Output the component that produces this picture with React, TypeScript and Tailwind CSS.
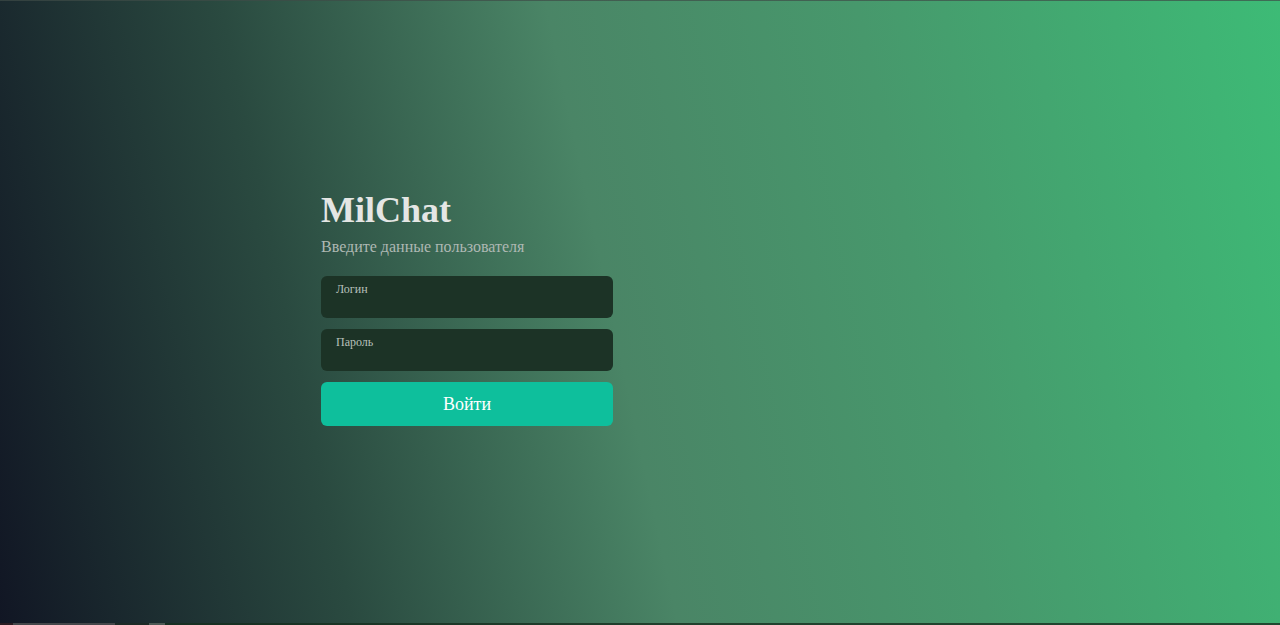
import React from "react";

export default function App() {
  return (
    <div
      className="w-[1280px] h-[625px] overflow-hidden flex flex-col bg-[linear-gradient(78deg,#111624_0%,#2a4a40_25%,#4a8566_48%,#47986c_70%,#3dbb76_100%)]"
      style={{ fontFamily: '"Liberation Serif", "Times New Roman", serif' }}
    >
      <div className="h-px w-full bg-[#3e4c47]/70 shrink-0" />
      <div className="flex-1 flex flex-col pl-[321px] pt-[189px]">
        <h1 className="text-[36px] leading-[40px] font-bold text-[#e4e6e4]">MilChat</h1>
        <p className="mt-[5px] text-[16px] leading-[24px] text-[#aeb8b3]">Введите данные пользователя</p>
        <div className="mt-[17px] w-[292px] flex flex-col gap-[11px]">
          <div className="relative h-[42px] rounded-md bg-[#1c3326]">
            <span className="absolute left-[15px] top-[5px] text-[12px] leading-[16px] text-[#b8c0bb]">Логин</span>
          </div>
          <div className="relative h-[42px] rounded-md bg-[#1c3326]">
            <span className="absolute left-[15px] top-[5px] text-[12px] leading-[16px] text-[#b8c0bb]">Пароль</span>
          </div>
          <button className="h-[44px] rounded-md bg-[#0ebf9c] text-white text-[18px] leading-[24px] flex items-center justify-center">
            Войти
          </button>
        </div>
      </div>
      <div className="h-[2px] w-full flex shrink-0">
        <div className="w-[13px] bg-[#2a1c22]" />
        <div className="w-[102px] bg-[#44474a]" />
        <div className="w-[34px] bg-[#1c2a26]" />
        <div className="w-[16px] bg-[#4d5a55]" />
        <div className="flex-1 bg-[#17301f]/80" />
      </div>
    </div>
  );
}
